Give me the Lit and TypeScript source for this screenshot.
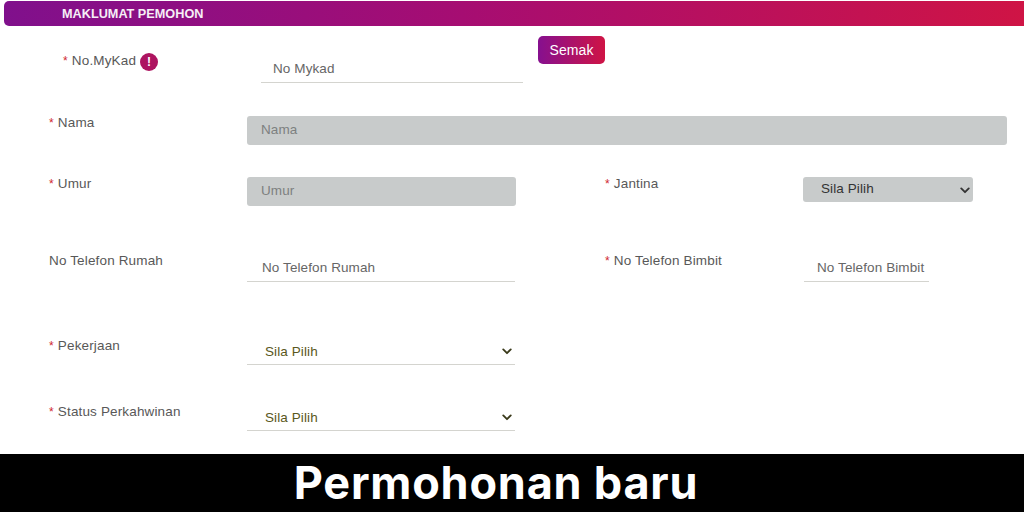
import { LitElement, html, css } from "lit";
import { customElement } from "lit/decorators.js";

const chevron = html`<svg class="chev" viewBox="0 0 12 8" aria-hidden="true"><path d="M1.5 1.5 6 6l4.5-4.5" fill="none" stroke="currentColor" stroke-width="2.2" stroke-linecap="round" stroke-linejoin="round"/></svg>`;

@customElement("app-root")
export class AppRoot extends LitElement {
  static styles = css`
    :host { display: flex; flex-direction: column; width: 1024px; height: 512px; background: #fff; overflow: hidden; font-family: "Liberation Sans", Arial, sans-serif; font-size: 13.5px; color: #585858; }
    .bar { height: 25px; margin: 1px 0 0 4px; padding-left: 58px; display: flex; align-items: center; box-sizing: border-box; border-radius: 5px 0 0 5px; background: linear-gradient(90deg, #80108c 0%, #a60d72 45%, #cf1445 100%); color: #f6eef6; font-weight: 700; font-size: 12.7px; }
    .form { flex: 1; padding-left: 49px; }
    .row { display: grid; grid-template-columns: 198px 269px 89px 198px 1fr; align-items: start; }
    .r1 { height: 82px; display: flex; }
    .r2 { height: 61px; grid-template-columns: 198px 760px; }
    .r3 { height: 76px; }
    .r4 { height: 84px; }
    .r5 { height: 66px; }
    .r6 { height: 59px; }
    .label { line-height: 20px; letter-spacing: 0.15px; white-space: nowrap; display: flex; align-items: center; }
    .star { color: #d0272f; margin-right: 4px; font-size: 12px; }
    .r1 .label { width: 198px; box-sizing: border-box; padding-left: 14px; margin-top: 25px; align-self: flex-start; }
    .r2 .label, .r3 .label { margin-top: 5px; }
    .r4 .label { margin-top: 6px; }
    .r5 .label, .r6 .label { margin-top: 7px; }
    .info { width: 18px; height: 18px; margin: 2px 0 0 4px; border-radius: 50%; background: #ad1460; color: #fff; font-size: 12px; font-weight: 700; display: flex; align-items: center; justify-content: center; }
    input, select { font: inherit; letter-spacing: 0.1px; box-sizing: border-box; display: block; width: 100%; border: none; outline: none; margin: 0; background: transparent; }
    input::placeholder { color: #666; opacity: 1; }
    .line { height: 30px; border-bottom: 1px solid #d4d4cf; padding: 2px 0 0 15px; }
    .filled { height: 29px; margin-top: 8px; background: #c8cbcb; border-radius: 3px; padding: 0 0 2px 14px; }
    .filled::placeholder { color: #7d8080; }
    .myk { width: 262px; margin: 27px 0 0 14px; padding-left: 12px; }
    .btn { margin: 10px 0 0 15px; width: 67px; height: 28px; border: none; border-radius: 5px; background: linear-gradient(90deg, #86108f, #cf1445); color: #fff; font: inherit; font-size: 14px; letter-spacing: 0.1px; padding: 0; }
    .r4 .line { margin-top: 7px; }
    .r4 .wide { width: 268px; }
    .short { width: 125px; margin-left: 1px; padding-left: 13px; }
    .sel { position: relative; color: #333; }
    .sel select { appearance: none; height: 100%; color: inherit; padding-left: 18px; }
    .chev { position: absolute; width: 10px; height: 7px; right: 3px; top: 50%; margin-top: -3px; pointer-events: none; color: #333; }
    .gray { width: 170px; height: 25px; margin-top: 8px; background: #c8cbcb; border-radius: 3px; }
    .gray select { padding-bottom: 2px; }
    .under { width: 268px; height: 29px; margin-top: 6px; border-bottom: 1px solid #d4d4cf; color: #5a5820; }
    .under select { padding-top: 3px; }
    .under .chev { color: #3a3a1a; margin-top: -2px; }
    .caption { height: 58px; background: #000; color: #fff; display: flex; align-items: center; justify-content: center; font-family: Inter, sans-serif; font-weight: 700; font-size: 45px; letter-spacing: 0.8px; padding: 0 32px 2px 0; box-sizing: border-box; }
  `;

  private label(t: string, req = true) {
    return html`<div class="label">${req ? html`<span class="star">*</span>` : ""}${t}</div>`;
  }

  render() {
    return html`
      <div class="bar">MAKLUMAT PEMOHON</div>
      <div class="form">
        <div class="r1">
          <div class="label"><span class="star">*</span>No.MyKad<span class="info">!</span></div>
          <input class="line myk" placeholder="No Mykad" />
          <button class="btn">Semak</button>
        </div>
        <div class="row r2">
          ${this.label("Nama")}
          <input class="filled" placeholder="Nama" disabled />
        </div>
        <div class="row r3">
          ${this.label("Umur")}
          <input class="filled" placeholder="Umur" disabled />
          <span></span>
          ${this.label("Jantina")}
          <div class="sel gray"><select><option>Sila Pilih</option></select>${chevron}</div>
        </div>
        <div class="row r4">
          ${this.label("No Telefon Rumah", false)}
          <input class="line wide" placeholder="No Telefon Rumah" />
          <span></span>
          ${this.label("No Telefon Bimbit")}
          <input class="line short" placeholder="No Telefon Bimbit" />
        </div>
        <div class="row r5">
          ${this.label("Pekerjaan")}
          <div class="sel under"><select><option>Sila Pilih</option></select>${chevron}</div>
        </div>
        <div class="row r6">
          ${this.label("Status Perkahwinan")}
          <div class="sel under"><select><option>Sila Pilih</option></select>${chevron}</div>
        </div>
      </div>
      <div class="caption">Permohonan baru</div>
    `;
  }
}
